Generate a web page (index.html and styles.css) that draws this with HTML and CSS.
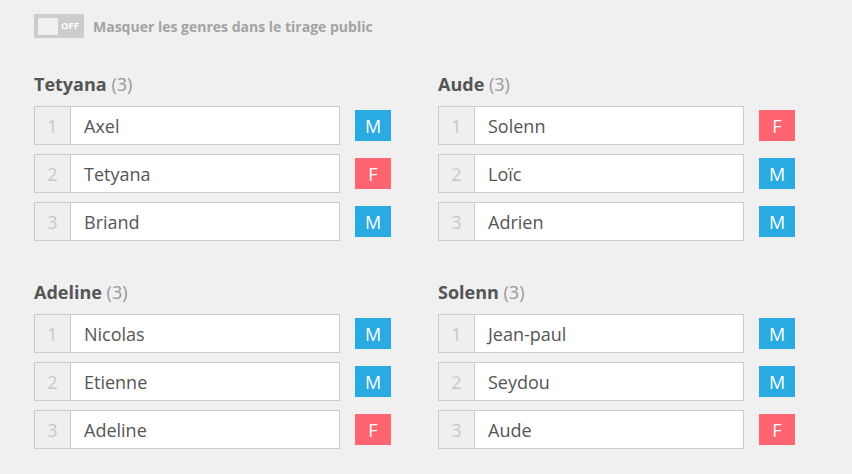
FILE: index.html
```html
<!DOCTYPE html>
<html lang="fr">
<head>
<meta charset="utf-8">
<title>Tirage</title>
<link rel="stylesheet" href="styles.css">
</head>
<body>
<div class="page">
  <div class="toggle-row">
    <div class="toggle"><span class="knob"></span><span class="off">OFF</span></div>
    <span class="toggle-label">Masquer les genres dans le tirage public</span>
  </div>
  <div class="groups">
    <section class="group">
      <h2 class="group-title">Tetyana <span class="count">(3)</span></h2>
      <div class="row"><div class="field"><span class="num">1</span><span class="name">Axel</span></div><span class="badge m">M</span></div>
      <div class="row"><div class="field"><span class="num">2</span><span class="name">Tetyana</span></div><span class="badge f">F</span></div>
      <div class="row"><div class="field"><span class="num">3</span><span class="name">Briand</span></div><span class="badge m">M</span></div>
    </section>
    <section class="group">
      <h2 class="group-title">Aude <span class="count">(3)</span></h2>
      <div class="row"><div class="field"><span class="num">1</span><span class="name">Solenn</span></div><span class="badge f">F</span></div>
      <div class="row"><div class="field"><span class="num">2</span><span class="name">Loïc</span></div><span class="badge m">M</span></div>
      <div class="row"><div class="field"><span class="num">3</span><span class="name">Adrien</span></div><span class="badge m">M</span></div>
    </section>
    <section class="group">
      <h2 class="group-title">Adeline <span class="count">(3)</span></h2>
      <div class="row"><div class="field"><span class="num">1</span><span class="name">Nicolas</span></div><span class="badge m">M</span></div>
      <div class="row"><div class="field"><span class="num">2</span><span class="name">Etienne</span></div><span class="badge m">M</span></div>
      <div class="row"><div class="field"><span class="num">3</span><span class="name">Adeline</span></div><span class="badge f">F</span></div>
    </section>
    <section class="group">
      <h2 class="group-title">Solenn <span class="count">(3)</span></h2>
      <div class="row"><div class="field"><span class="num">1</span><span class="name">Jean-paul</span></div><span class="badge m">M</span></div>
      <div class="row"><div class="field"><span class="num">2</span><span class="name">Seydou</span></div><span class="badge m">M</span></div>
      <div class="row"><div class="field"><span class="num">3</span><span class="name">Aude</span></div><span class="badge f">F</span></div>
    </section>
  </div>
</div>
</body>
</html>
```

FILE: styles.css
```css
html, body {
  margin: 0;
  padding: 0;
  background: #f0f0f0;
}
body {
  font-family: "Open Sans", "DejaVu Sans", sans-serif;
  color: #555;
}
.page {
  padding: 14px 0 0 34px;
}
.toggle-row {
  display: flex;
  align-items: center;
  height: 24px;
}
.toggle {
  width: 50px;
  height: 24px;
  box-sizing: border-box;
  background: #cccccc;
  padding: 3px 4px;
  display: flex;
  align-items: center;
}
.knob {
  width: 20px;
  height: 17px;
  background: #f0f0f0;
}
.off {
  margin-left: 3px;
  color: #fff;
  font-size: 9.5px;
  font-weight: 700;
  line-height: 1;
}
.toggle-label {
  margin-left: 9px;
  font-size: 14px;
  font-weight: 700;
  color: #a3a3a3;
}
.groups {
  margin-top: 34px;
  display: grid;
  grid-template-columns: 357px 357px;
  column-gap: 47px;
  row-gap: 39px;
}
.group-title {
  margin: 0 0 10px;
  font-size: 18px;
  line-height: 24px;
  font-weight: 700;
  color: #555;
}
.count {
  font-weight: 400;
  color: #999;
}
.row {
  display: flex;
  align-items: center;
  margin-bottom: 9px;
}
.row:last-child {
  margin-bottom: 0;
}
.field {
  display: flex;
  width: 306px;
  height: 39px;
  box-sizing: border-box;
  border: 1px solid #cccccc;
  background: #fff;
}
.num {
  width: 36px;
  flex: none;
  box-sizing: border-box;
  border-right: 1px solid #cccccc;
  background: #efefef;
  color: #c8c8c8;
  font-size: 18px;
  display: flex;
  align-items: center;
  justify-content: center;
}
.name {
  padding-left: 13px;
  display: flex;
  align-items: center;
  font-size: 18px;
  color: #555;
}
.badge {
  margin-left: 15px;
  width: 36px;
  height: 31px;
  display: flex;
  align-items: center;
  justify-content: center;
  color: #fff;
  font-size: 18px;
}
.badge.m {
  background: #29abe2;
}
.badge.f {
  background: #ff6471;
}
```
